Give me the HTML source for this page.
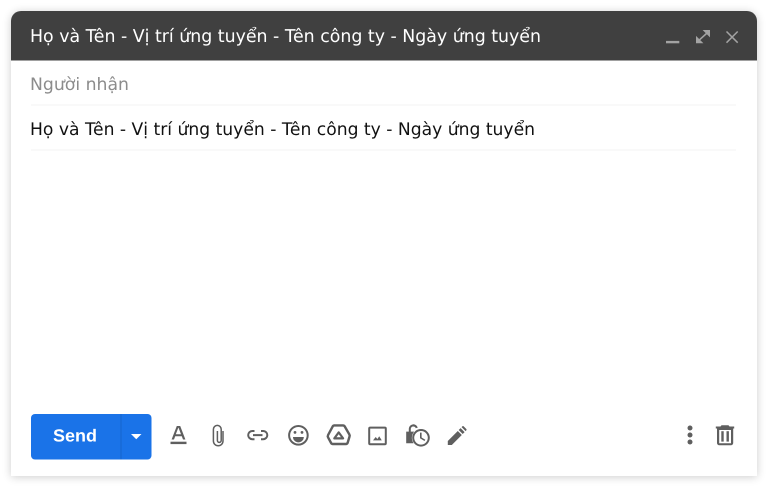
<!DOCTYPE html>
<html><head><meta charset="utf-8"><style>
html,body{margin:0;padding:0;background:#fff;width:768px;height:487px;overflow:hidden}
#card{position:absolute;left:11px;top:11px;width:746px;height:465px;background:#fff;border-radius:10px 10px 0 0;box-shadow:0 1px 9px rgba(0,0,0,.2)}
svg{position:absolute;left:0;top:0}
text{font-family:"DejaVu Sans","Liberation Sans",sans-serif;text-rendering:geometricPrecision}
</style></head><body>
<div id="card"></div>
<svg width="768" height="487" viewBox="0 0 768 487">
<path d="M11 60.5V21a10 10 0 0 1 10-10H747a10 10 0 0 1 10 10V60.5Z" fill="#404040"/>
<text x="30" y="42" font-size="17.6" fill="#fff" textLength="511" lengthAdjust="spacingAndGlyphs">Họ và Tên - Vị trí ứng tuyển - Tên công ty - Ngày ứng tuyển</text>
<rect x="666" y="40.9" width="13.3" height="2.4" fill="#a3a3a3"/>
<path d="M702.6 30H710v7.4ZM703.4 43.3H696v-7.4Z" fill="#a3a3a3"/>
<path d="M706.5 33.5l-7 6.3" stroke="#a3a3a3" stroke-width="1.6" fill="none"/>
<path d="M726.5 31.5l11.2 11.2M737.7 31.5l-11.2 11.2" stroke="#a3a3a3" stroke-width="1.5" fill="none"/>
<text x="30" y="90" font-size="17.2" fill="#8c8c8c" textLength="99" lengthAdjust="spacingAndGlyphs">Người nhận</text>
<rect x="31" y="104.5" width="705" height="1" fill="#f3f3f3"/>
<text x="30" y="135" font-size="17.4" fill="#111" textLength="505" lengthAdjust="spacingAndGlyphs">Họ và Tên - Vị trí ứng tuyển - Tên công ty - Ngày ứng tuyển</text>
<rect x="31" y="149.5" width="705" height="1" fill="#f3f3f3"/>
<rect x="31" y="414" width="120.5" height="45.5" rx="4" fill="#1a73e8"/>
<rect x="120.5" y="414" width="1" height="45.5" fill="#1765cc"/>
<text x="53" y="441.5" font-size="17.5" font-weight="700" fill="#fff" textLength="44" lengthAdjust="spacingAndGlyphs" style="font-family:'Liberation Sans',sans-serif">Send</text>
<path d="M131 434h10.5l-5.25 5.2Z" fill="#fff"/>
<g fill="#5f5f5f">
<rect x="170.5" y="441.7" width="16" height="2.4"/>
<path fill-rule="evenodd" d="M171.6 439.5l5.2-13.5h3.4l5.2 13.5h-2.4l-1.2-3.3h-6.6l-1.2 3.3Zm4.2-5.3h5.2l-2.5-6.4h-.2Z"/>
<path fill-rule="evenodd" d="M298.4 425a10.3 10.3 0 1 0 0 20.6 10.3 10.3 0 0 0 0-20.6Zm0 18.6a8.3 8.3 0 1 1 0-16.6 8.3 8.3 0 0 1 0 16.6Z"/>
<circle cx="295" cy="432.4" r="1.4"/><circle cx="302" cy="432.4" r="1.4"/>
<path d="M293 437h10.8a5.4 5.4 0 0 1-10.8 0Z"/>
<path d="M406.2 431.6h2.6v-3a4.6 4.6 0 0 1 9-1 9.5 9.5 0 0 0-2 .7 2.6 2.6 0 0 0-5 .3v3h3.4a9.3 9.3 0 0 0-.6 11.6h-7.4Z"/>
<path fill-rule="evenodd" d="M421 429a8.8 8.8 0 1 0 0 17.6 8.8 8.8 0 0 0 0-17.6Zm0 15.6a6.8 6.8 0 1 1 0-13.6 6.8 6.8 0 0 1 0 13.6Z"/>
<path d="M420 432.6h1.6v4.9l3.7 2.2-.8 1.3-4.5-2.7Z"/>
<path d="M447.8 441v4h4l10-10-4-4ZM458.7 430l4 4 1.9-1.9-4-4ZM461.6 427.1l4 4 .7-.7a1 1 0 0 0 0-1.4l-2.6-2.6a1 1 0 0 0-1.4 0Z"/>
<path d="M373 440.4l2.7-3.4 1.7 2 1.8-2.8 2.6 4.2Z"/>
<circle cx="690" cy="428" r="2.5"/><circle cx="690" cy="435" r="2.5"/><circle cx="690" cy="442" r="2.5"/>
<path d="M721.5 425.2h7l1 1.3h4.7v2h-18.4v-2h4.7Z"/>
<path fill-rule="evenodd" d="M717 428.5h16.2V443a2.3 2.3 0 0 1-2.3 2.3h-11.6A2.3 2.3 0 0 1 717 443Zm2.2 1.5V443.2h11.8V430Z"/>
<rect x="721.3" y="431.2" width="2.4" height="10.4"/><rect x="726.5" y="431.2" width="2.4" height="10.4"/>
</g>
<g fill="none" stroke="#5f5f5f">
<path d="M223 431v10a4.8 4.8 0 0 1-9.6 0V429.3a3.9 3.9 0 0 1 7.8 0V440.5a1.9 1.9 0 0 1-3.8 0V431" stroke-width="1.5"/>
<path d="M254.5 431h-2.2a4.1 4.1 0 0 0 0 8.2h2.2M261 431h2.2a4.1 4.1 0 0 1 0 8.2H261M253 435.1h9.5" stroke-width="2"/>
<path d="M334.4 425.4h8.6a2 2 0 0 1 1.7 1l4.6 8a2.6 2.6 0 0 1 .2 2.2l-1.8 6a2 2 0 0 1-1.9 1.4h-13a2 2 0 0 1-1.7-1l-3-5.6a2.6 2.6 0 0 1 0-2.4l4.6-8.6a2 2 0 0 1 1.7-1Z" stroke-width="2.4" stroke-linejoin="round"/>
<path d="M338.7 432.4l4.4 6h-8.8Z" stroke-width="2.2" stroke-linejoin="round"/>
<rect x="369.2" y="427.6" width="16.6" height="16.6" rx="1" stroke-width="2"/>
</g>
</svg>
</body></html>
